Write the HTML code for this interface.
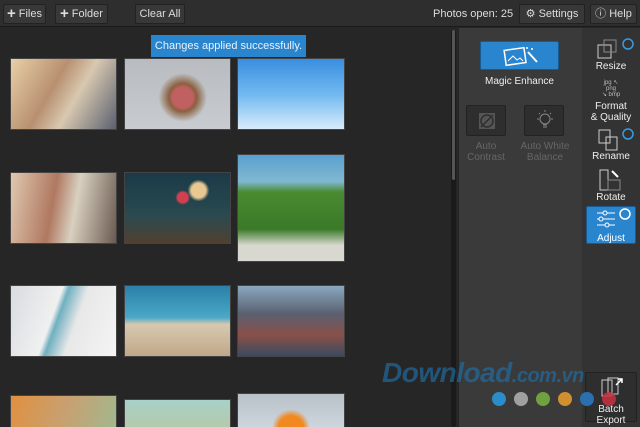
<!DOCTYPE html>
<html><head><meta charset="utf-8"><style>
*{margin:0;padding:0;box-sizing:border-box}
html,body{width:640px;height:427px;overflow:hidden}
body{background:#262626;font-family:"Liberation Sans",sans-serif;position:relative;color:#ddd}
.top{position:absolute;left:0;top:0;width:640px;height:27px;background:#2e2e2e;border-bottom:1px solid #1a1a1a}
.btn{position:absolute;top:4px;height:20px;background:#383838;border:1px solid #222;border-radius:2px;font-size:11px;color:#ddd;line-height:18px;text-align:center;white-space:nowrap}
.btn b{font-size:15px;font-weight:bold;margin-right:3px;vertical-align:-1px}
.ph{position:absolute;border:1px solid #444}
.toast{position:absolute;left:151px;top:35px;width:155px;height:22px;background:#2a85cf;color:#e8f2fb;font-size:11px;text-align:center;line-height:22px;white-space:nowrap}
.sb{position:absolute;left:451px;top:30px;width:5px;height:397px;background:#1a1a1a;border-radius:3px}
.sbt{position:absolute;left:452px;top:30px;width:3px;height:150px;background:#555;border-radius:2px}
.mid{position:absolute;left:459px;top:28px;width:123px;height:399px;background:#3a3a3a}
.right{position:absolute;left:582px;top:28px;width:58px;height:399px;background:#333}
.lbl{position:absolute;font-size:10px;text-align:center;color:#eee;white-space:nowrap}
.dim{color:#666}
.tool{position:absolute;left:0;width:58px;text-align:center;font-size:10px;color:#eee}
.dot{position:absolute;top:392px;width:14px;height:14px;border-radius:50%}
.clip{position:absolute;left:0;top:0;width:640px;height:427px;overflow:hidden}
</style></head><body><div class="clip">
<div class="top">
<div class="btn" style="left:3px;width:43px"><b>+</b>Files</div>
<div class="btn" style="left:55px;width:53px"><b>+</b>Folder</div>
<div class="btn" style="left:135px;width:50px">Clear All</div>
<div style="position:absolute;left:433px;top:8px;font-size:11px;color:#ddd;white-space:nowrap">Photos open: 25</div>
<div class="btn" style="left:519px;width:66px">⚙ Settings</div>
<div class="btn" style="left:590px;width:47px">ⓘ Help</div>
</div>

<div class="ph" style="left:10px;top:58px;width:107px;height:72px;background:linear-gradient(120deg,#e8d0a8,#b89070 40%,#d8c8b0 60%,#5a6070)"></div>
<div class="ph" style="left:124px;top:58px;width:107px;height:72px;background:radial-gradient(circle at 55% 55%,#c06060 0 15%,#8a6040 20%,transparent 35%),linear-gradient(#b8bcc0,#c8ccd0)"></div>
<div class="ph" style="left:237px;top:58px;width:108px;height:72px;background:linear-gradient(#3a8ee0,#70b8f0 50%,#d8ecfa)"></div>

<div class="ph" style="left:10px;top:172px;width:107px;height:72px;background:linear-gradient(100deg,#e0c8b0,#b07860 40%,#d8d0c0 60%,#6a5a50)"></div>
<div class="ph" style="left:124px;top:172px;width:107px;height:72px;background:radial-gradient(circle at 70% 25%,#e8c890 0 8%,transparent 12%),radial-gradient(circle at 55% 35%,#d04050 0 7%,transparent 10%),linear-gradient(#1a3a48,#2a4a50 60%,#504030)"></div>
<div class="ph" style="left:237px;top:154px;width:108px;height:108px;background:linear-gradient(#5aa0d0,#80b8d0 25%,#4a8a30 35%,#3a7a28 70%,#d8d8d0 85%)"></div>

<div class="ph" style="left:10px;top:285px;width:107px;height:72px;background:linear-gradient(110deg,#d8dce0,#f0f0f0 40%,#70b0c0 45%,#e8e8e8 60%,#f4f4f4)"></div>
<div class="ph" style="left:124px;top:285px;width:107px;height:72px;background:linear-gradient(#2a80a8,#4aa8c8 45%,#d8c8b0 55%,#c0a888)"></div>
<div class="ph" style="left:237px;top:285px;width:108px;height:72px;background:linear-gradient(#8aa8c0,#5a6070 40%,#8a5048 70%,#3a4a60)"></div>

<div class="ph" style="left:10px;top:395px;width:107px;height:40px;background:linear-gradient(110deg,#e09040,#c8a070 50%,#a0b890)"></div>
<div class="ph" style="left:124px;top:399px;width:107px;height:40px;background:linear-gradient(#a8d0c8,#b8c8a0)"></div>
<div class="ph" style="left:237px;top:393px;width:108px;height:40px;background:radial-gradient(circle at 50% 90%,#f08a20 0 20%,transparent 30%),linear-gradient(#b8c0c8,#d0d8e0)"></div>

<div class="toast">Changes applied successfully.</div>
<div class="sb"></div><div class="sbt"></div>

<div class="mid">
<div style="position:absolute;left:21px;top:13px;width:79px;height:29px;background:#2a85cf;border:1px solid #1a5a90;border-radius:2px">
<svg width="79" height="29"><rect x="24" y="7" width="20" height="15" fill="none" stroke="#fff" stroke-width="1.5" transform="rotate(-8 34 14)"/><path d="M27 19l5-5 4 4 3-2 3 3" stroke="#fff" fill="none"/><path d="M47 10l9 10" stroke="#fff" stroke-width="2"/><circle cx="46" cy="6" r="1" fill="#fff"/><circle cx="51" cy="7" r="1" fill="#fff"/></svg></div>
<div class="lbl" style="left:0;width:121px;top:48px">Magic Enhance</div>
<div style="position:absolute;left:7px;top:77px;width:40px;height:31px;background:#2e2e2e;border:1px solid #222;border-radius:2px"><svg width="40" height="31"><rect x="12" y="7" width="16" height="16" fill="#555"/><circle cx="20" cy="15" r="6" fill="none" stroke="#2e2e2e" stroke-width="1.5"/><path d="M14 21l12-12" stroke="#2e2e2e" stroke-width="1.5"/></svg></div>
<div style="position:absolute;left:65px;top:77px;width:40px;height:31px;background:#2e2e2e;border:1px solid #222;border-radius:2px"><svg width="40" height="31"><circle cx="20" cy="13" r="5" fill="none" stroke="#888"/><path d="M18 19h4M18 21h4M20 4v2M12 13h2M26 13h2M14 7l1 1M26 7l-1 1" stroke="#888"/></svg></div>
<div class="lbl dim" style="left:4px;width:46px;top:113px;line-height:11px">Auto<br>Contrast</div>
<div class="lbl dim" style="left:58px;width:56px;top:113px;line-height:11px">Auto White<br>Balance</div>
</div>

<div class="right">
<svg style="position:absolute;left:14px;top:10px" width="40" height="22"><rect x="2" y="7" width="13" height="13" fill="none" stroke="#ccc"/><rect x="8" y="2" width="12" height="12" fill="none" stroke="#888"/><circle cx="32" cy="6" r="5" fill="none" stroke="#3a9ae0" stroke-width="1.5"/></svg>
<div class="tool" style="top:33px">Resize</div>
<div class="tool" style="top:52px;font-size:6px;color:#bbb;line-height:6px">jpg ↖<br>png<br>↘ bmp</div>
<div class="tool" style="top:73px;line-height:11px">Format<br>&amp; Quality</div>
<svg style="position:absolute;left:14px;top:100px" width="40" height="24"><rect x="3" y="2" width="11" height="13" fill="none" stroke="#ccc"/><rect x="10" y="9" width="11" height="13" fill="none" stroke="#ccc"/><circle cx="32" cy="6" r="5" fill="none" stroke="#3a9ae0" stroke-width="1.5"/></svg>
<div class="tool" style="top:123px">Rename</div>
<svg style="position:absolute;left:16px;top:140px" width="26" height="24"><rect x="2" y="2" width="8" height="20" fill="none" stroke="#ccc"/><rect x="10" y="12" width="12" height="10" fill="none" stroke="#888"/><path d="M14 3l6 6" stroke="#fff" stroke-width="2"/></svg>
<div class="tool" style="top:164px">Rotate</div>
<div style="position:absolute;left:4px;top:178px;width:50px;height:38px;background:#2a85cf;border:1px solid #1a5a90;border-radius:2px">
<svg width="50" height="24"><path d="M10 6h18M10 12h18M10 18h18" stroke="#fff"/><circle cx="18" cy="6" r="2" fill="#2a85cf" stroke="#fff"/><circle cx="14" cy="12" r="2" fill="#2a85cf" stroke="#fff"/><circle cx="20" cy="18" r="2" fill="#2a85cf" stroke="#fff"/><circle cx="38" cy="7" r="5" fill="none" stroke="#fff" stroke-width="1.5"/></svg>
<div style="text-align:center;font-size:10px;color:#fff;margin-top:-3px">Adjust</div></div>
<div style="position:absolute;left:3px;top:344px;width:52px;height:50px;background:#2e2e2e;border:1px solid #222;border-radius:2px">
<svg width="52" height="26"><rect x="16" y="7" width="10" height="16" fill="none" stroke="#ccc"/><rect x="22" y="5" width="10" height="16" fill="none" stroke="#ccc"/><path d="M30 12l6-6M32 6h4v4" stroke="#fff" stroke-width="1.5" fill="none"/></svg>
<div style="text-align:center;font-size:10px;color:#eee;line-height:11px">Batch<br>Export</div></div>
</div>

<div style="position:absolute;left:382px;top:358px;font-size:28px;font-weight:bold;font-style:italic;color:#1f6fa8;opacity:.65;letter-spacing:-0.5px;white-space:nowrap;line-height:30px">Download<span style="font-size:20px">.com.vn</span></div>
<div class="dot" style="left:492px;background:#2a8cc8"></div>
<div class="dot" style="left:514px;background:#a0a0a0"></div>
<div class="dot" style="left:536px;background:#70a040"></div>
<div class="dot" style="left:558px;background:#d09030"></div>
<div class="dot" style="left:580px;background:#2a70b0"></div>
<div class="dot" style="left:602px;background:#c83040;opacity:.85"></div>
</div></body></html>
